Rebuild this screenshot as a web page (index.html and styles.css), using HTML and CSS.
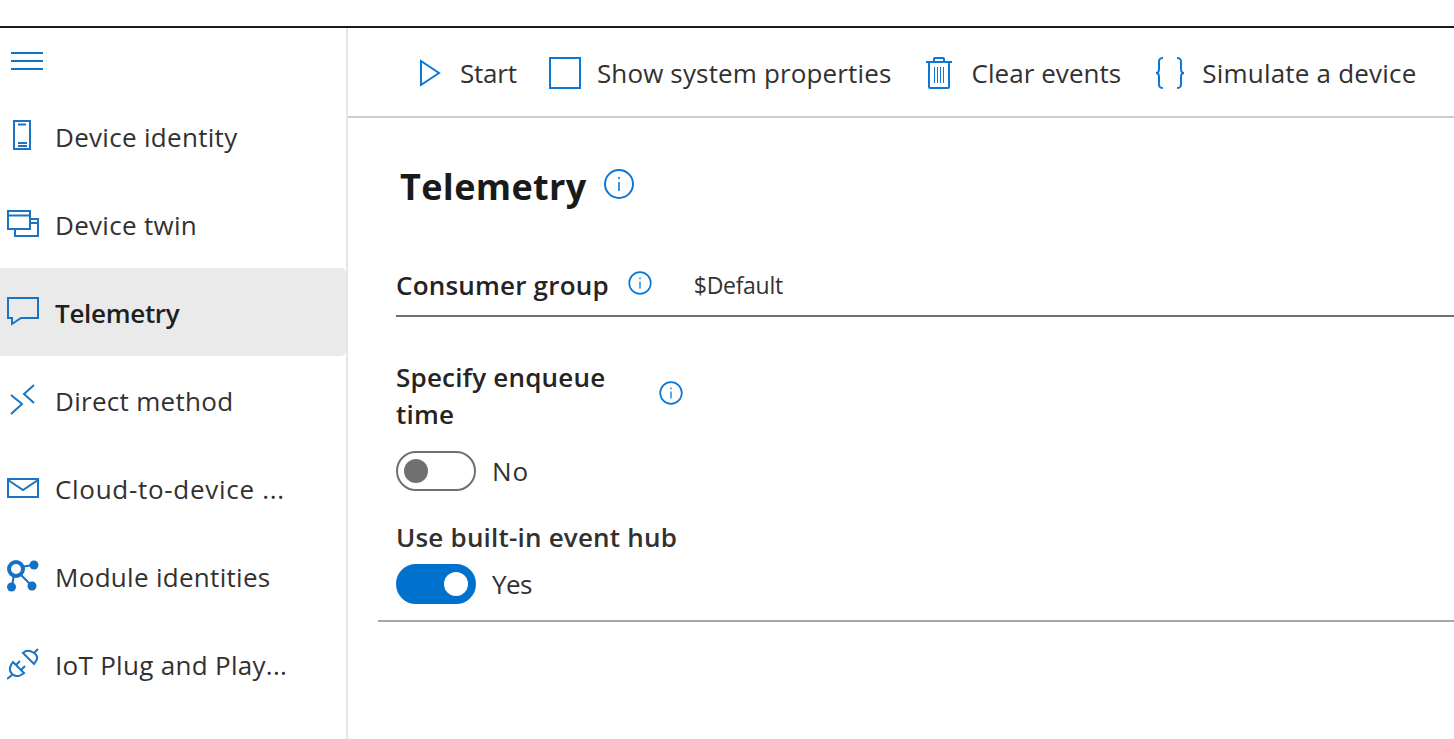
FILE: index.html
```html
<!DOCTYPE html>
<html lang="en">
<head>
<meta charset="utf-8">
<title>Telemetry</title>
<link rel="stylesheet" href="styles.css">
</head>
<body>
<div class="topbar"></div>
<div class="app">
  <nav class="sidebar">
    <div class="menu-row">
      <svg class="hamburger" width="32" height="18" viewBox="0 0 32 18"><path d="M0 0h32v2H0zM0 8h32v2H0zM0 16h32v2H0z" fill="#0a74c9"/></svg>
    </div>
    <a class="nav-item">
      <svg class="nav-icon" width="32" height="32" viewBox="0 0 32 32" fill="none" stroke="#1a74c2" stroke-width="2"><rect x="7" y="1" width="16" height="28"/><path d="M11 4.500h8M11 23h9M11 26h9"/></svg>
      <span class="nav-text">Device identity</span>
    </a>
    <a class="nav-item">
      <svg class="nav-icon" width="32" height="32" viewBox="0 0 32 32" fill="none" stroke="#1a74c2" stroke-width="2"><rect x="1" y="3" width="22" height="18"/><path d="M1 7.500h22"/><path d="M23 11h8v17H8v-7M23 15h8"/></svg>
      <span class="nav-text">Device twin</span>
    </a>
    <a class="nav-item active">
      <svg class="nav-icon" width="32" height="32" viewBox="0 0 32 32" fill="none" stroke="#1a74c2" stroke-width="2"><path d="M1 2h30v20H14l-9 6v-6H1z"/></svg>
      <span class="nav-text">Telemetry</span>
    </a>
    <a class="nav-item">
      <svg class="nav-icon" width="32" height="32" viewBox="0 0 32 32" fill="none" stroke="#1a74c2" stroke-width="2"><path d="M4 11l11 9-11 10M27 1L17 10l10 9"/></svg>
      <span class="nav-text">Direct method</span>
    </a>
    <a class="nav-item">
      <svg class="nav-icon" width="32" height="32" viewBox="0 0 32 32" fill="none" stroke="#1a74c2" stroke-width="2"><rect x="1" y="7" width="30" height="18"/><path d="M1 8l15 10L31 8"/></svg>
      <span class="nav-text nav-text-wide">Cloud-to-device ...</span>
    </a>
    <a class="nav-item">
      <svg class="nav-icon" width="32" height="32" viewBox="0 0 32 32" fill="none" stroke="#1273c4"><circle cx="9" cy="9" r="7" stroke-width="4"/><circle cx="27" cy="5" r="4.500" fill="#1273c4" stroke="none"/><circle cx="4.500" cy="27" r="4.500" fill="#1273c4" stroke="none"/><circle cx="25" cy="26" r="4.500" fill="#1273c4" stroke="none"/><path d="M14 7l12-2M7 14L5 27M13 14l12 12" stroke-width="2"/></svg>
      <span class="nav-text">Module identities</span>
    </a>
    <a class="nav-item">
      <svg class="nav-icon" width="32" height="32" viewBox="0 0 32 32" fill="none" stroke="#1a74c2" stroke-width="2"><path d="M0 31l5-4M27 5l4-4"/><path d="M6 14l11 11-3 2c-3 2-7 1-9-1s-3-5-1-9zM16 5l11 11 2-3c2-3 1-6-2-8s-5-3-8-2z"/><path d="M9 17l4-4M14 22l4-4"/></svg>
      <span class="nav-text">IoT Plug and Play...</span>
    </a>
  </nav>
  <main class="main">
    <div class="toolbar">
      <button class="tool tool-start">
        <svg class="tool-icon" width="32" height="32" viewBox="0 0 32 32" fill="none" stroke="#0a78d4" stroke-width="2"><path d="M6 4l18 12L6 28z"/></svg>
        <span>Start</span>
      </button>
      <button class="tool">
        <svg class="tool-icon" width="32" height="32" viewBox="0 0 32 32" fill="none" stroke="#0a78d4" stroke-width="2"><rect x="1" y="1" width="30" height="30"/></svg>
        <span>Show system properties</span>
      </button>
      <button class="tool tool-clear">
        <svg class="tool-icon" width="26" height="32" viewBox="0 0 26 32" fill="none" stroke="#0a78d4" stroke-width="2"><path d="M0 5h26M3 5v25a1 1 0 0 0 1 1h18a1 1 0 0 0 1-1V5M8 5V2a1 1 0 0 1 1-1h8a1 1 0 0 1 1 1v3"/><path d="M8.500 10v16M11.500 10v16M14.500 10v16M17.500 10v16" stroke-width="1"/></svg>
        <span>Clear events</span>
      </button>
      <button class="tool tool-simulate">
        <svg class="tool-icon" width="30" height="32" viewBox="0 0 30 32" fill="none" stroke="#0a78d4" stroke-width="2"><path d="M8 1C4 1 4 3 4 6v6c0 2-1 4-3 4 2 0 3 2 3 4v6c0 3 0 5 4 5M22 1c4 0 4 2 4 5v6c0 2 1 4 3 4-2 0-3 2-3 4v6c0 3 0 5-4 5"/></svg>
        <span>Simulate a device</span>
      </button>
    </div>
    <section class="content">
      <div class="title-row">
        <h1 class="title">Telemetry</h1>
        <svg class="info title-info" width="30" height="30" viewBox="0 0 30 30" fill="none" stroke="#0a78d4" stroke-width="2"><circle cx="15" cy="15" r="14"/><path d="M15 13v9M15 8v2" stroke-width="1.600"/></svg>
      </div>
      <div class="consumer-row">
        <label class="label consumer-label">Consumer group</label>
        <svg class="info consumer-info" width="24" height="24" viewBox="0 0 24 24" fill="none" stroke="#0a78d4" stroke-width="1.700"><circle cx="12" cy="12" r="10.800"/><path d="M12 10.500v7M12 6.500v1.700" stroke-width="1.300"/></svg>
        <span class="consumer-value">$Default</span>
      </div>
      <div class="enqueue-row">
        <label class="label enqueue-label">Specify enqueue time</label>
        <svg class="info enqueue-info" width="24" height="24" viewBox="0 0 24 24" fill="none" stroke="#0a78d4" stroke-width="1.700"><circle cx="12" cy="12" r="10.800"/><path d="M12 10.500v7M12 6.500v1.700" stroke-width="1.300"/></svg>
      </div>
      <div class="toggle-row">
        <span class="toggle"><span class="knob"></span></span>
        <span class="toggle-text text-no">No</span>
      </div>
      <div class="label hub-label">Use built-in event hub</div>
      <div class="toggle-row">
        <span class="toggle on"><span class="knob"></span></span>
        <span class="toggle-text text-yes">Yes</span>
      </div>
    </section>
    <hr class="rule">
  </main>
</div>
</body>
</html>
```
FILE: styles.css
```css
* { box-sizing: border-box; }
html, body { margin: 0; height: 100%; overflow: hidden; }
body { background: #fff; color: #323130; font-family: "Open Sans", "Noto Sans", "Liberation Sans", sans-serif; }
.topbar { height: 28px; border-bottom: 2px solid #1a1a1a; }
.app { display: flex; height: 711px; }
.sidebar { width: 348px; flex: none; border-right: 2px solid #e6e6e6; }
.menu-row { height: 64px; padding: 24px 0 0 11px; }
.hamburger { display: block; }
.nav-item { display: flex; align-items: center; height: 88px; padding-left: 7px; gap: 16px; font-size: 26px; letter-spacing: 0.3px; white-space: nowrap; }
.nav-item.active { background: #eaeaea; border-radius: 0 5px 5px 0; font-weight: 600; color: #201f1e; letter-spacing: -0.3px; }
.nav-text { padding-top: 1px; }
.nav-text-wide { letter-spacing: 0.7px; }
.nav-icon { flex: none; }
.main { flex: 1; min-width: 0; }
.toolbar { display: flex; align-items: center; height: 90px; padding: 2px 0 0 67px; border-bottom: 2px solid #cdcdcd; }
.tool { display: flex; align-items: center; gap: 16px; margin: 0 32px 0 0; padding: 0; border: 0; background: none; color: #323130; font: inherit; font-size: 26px; letter-spacing: 0.15px; white-space: nowrap; }
.tool-icon { flex: none; }
.tool-start { gap: 13px; letter-spacing: -0.2px; }
.tool-clear { gap: 20px; margin-left: 2px; letter-spacing: 0.05px; }
.tool-simulate { gap: 17px; margin-left: 2px; letter-spacing: 0.2px; }
.content { padding: 0 0 16px 48px; }
.title-row { display: flex; align-items: center; height: 70px; margin-top: 33px; padding-left: 4px; gap: 17px; }
.title { margin: 0; font-size: 36px; font-weight: 700; color: #1a1a1a; letter-spacing: 0.35px; }
.title-info { margin-bottom: 4px; }
.label { font-size: 26px; font-weight: 600; color: #252423; letter-spacing: 0.2px; }
.consumer-row { display: flex; align-items: center; height: 58px; margin-top: 38px; padding-bottom: 5px; border-bottom: 2px solid #707070; }
.consumer-label { margin-right: 19px; }
.consumer-info { margin: 0 42px 3px 0; }
.consumer-value { font-size: 23px; letter-spacing: -0.3px; }
.enqueue-row { display: flex; align-items: center; margin-top: 42px; }
.enqueue-label { width: 263px; line-height: 37px; }
.enqueue-info { margin-bottom: 6px; }
.toggle-row { display: flex; align-items: center; height: 40px; gap: 16px; margin-top: 18px; }
.toggle { display: flex; align-items: center; width: 80px; height: 40px; padding: 0 6px; border: 2px solid #707070; border-radius: 20px; background: #fff; }
.knob { width: 24px; height: 24px; border-radius: 50%; background: #707070; }
.toggle.on { justify-content: flex-end; background: #0072ce; border-color: #0072ce; }
.toggle.on .knob { background: #fff; }
.toggle-text { font-size: 26px; }
.text-no { letter-spacing: 0.8px; }
.text-yes { letter-spacing: -0.6px; }
.hub-label { margin-top: 28px; line-height: 36px; color: #323130; }
.hub-label + .toggle-row { margin-top: 9px; }
.rule { margin: 0 0 0 30px; border: 0; border-top: 2px solid #a6a6a6; }
```
